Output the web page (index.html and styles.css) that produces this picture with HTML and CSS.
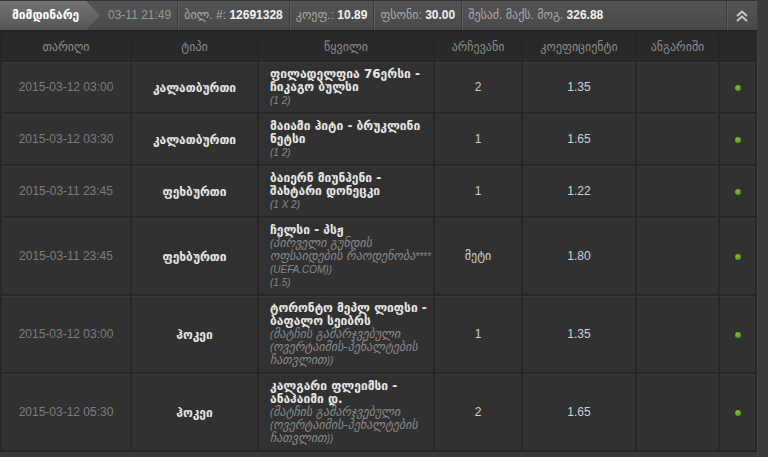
FILE: index.html
```html
<!DOCTYPE html>
<html>
  <head>
    <meta charset="utf-8">
    <title>Bet slip</title>
    <link rel="stylesheet" href="styles.css">
  </head>
  <body>
    <div class="screen">
      <div class="panel">
        <div class="bar">
          <div class="tab">მიმდინარე</div>
          <div class="cell muted first">03-11 21:49</div>
          <div class="cell">ბილ. #: <b>12691328</b></div>
          <div class="cell">კოეფ.: <b>10.89</b></div>
          <div class="cell">ფსონი: <b>30.00</b></div>
          <div class="cell grow">შესაძ. მაქს. მოგ. <b>326.88</b></div>
          <button class="toggle" type="button">
            <svg width="12" height="12" viewBox="0 0 12 12">
              <polyline points="1,6 6,1.5 11,6" fill="none" stroke="#c8c8c8" stroke-width="2"/>
              <polyline points="1,11 6,6.5 11,11" fill="none" stroke="#c8c8c8" stroke-width="2"/>
            </svg>
          </button>
        </div>

        <table class="bets">
          <colgroup>
            <col style="width:128px">
            <col style="width:125px">
            <col style="width:174px">
            <col style="width:86px">
            <col style="width:112px">
            <col style="width:81px">
            <col style="width:35px">
          </colgroup>
          <thead>
            <tr>
              <th>თარიღი</th>
              <th>ტიპი</th>
              <th>წყვილი</th>
              <th>არჩევანი</th>
              <th>კოეფიციენტი</th>
              <th>ანგარიში</th>
              <th></th>
            </tr>
          </thead>
          <tbody>
            <tr>
              <td class="date">2015-03-12 03:00</td>
              <td class="sport">კალათბურთი</td>
              <td class="match">
                <div class="name">ფილადელფია 76ერსი - ჩიკაგო ბულსი</div>
                <div class="sub">(1 2)</div>
              </td>
              <td class="val">2</td>
              <td class="val">1.35</td>
              <td></td>
              <td><span class="dot"></span></td>
            </tr>
            <tr>
              <td class="date">2015-03-12 03:30</td>
              <td class="sport">კალათბურთი</td>
              <td class="match">
                <div class="name">მაიამი ჰიტი - ბრუკლინი ნეტსი</div>
                <div class="sub">(1 2)</div>
              </td>
              <td class="val">1</td>
              <td class="val">1.65</td>
              <td></td>
              <td><span class="dot"></span></td>
            </tr>
            <tr>
              <td class="date">2015-03-11 23:45</td>
              <td class="sport">ფეხბურთი</td>
              <td class="match">
                <div class="name">ბაიერნ მიუნჰენი - შახტარი დონეცკი</div>
                <div class="sub">(1 X 2)</div>
              </td>
              <td class="val">1</td>
              <td class="val">1.22</td>
              <td></td>
              <td><span class="dot"></span></td>
            </tr>
            <tr>
              <td class="date">2015-03-11 23:45</td>
              <td class="sport">ფეხბურთი</td>
              <td class="match">
                <div class="name">ჩელსი - პსჟ</div>
                <div class="sub">(<span class="ka">პირველი გუნდის ოფსაიდების რაოდენობა</span>**** (UEFA.COM))</div>
                <div class="sub">(1.5)</div>
              </td>
              <td class="val ka-val">მეტი</td>
              <td class="val">1.80</td>
              <td></td>
              <td><span class="dot"></span></td>
            </tr>
            <tr>
              <td class="date">2015-03-12 03:00</td>
              <td class="sport">ჰოკეი</td>
              <td class="match">
                <div class="name">ტორონტო მეპლ ლიფსი - ბაფალო სეიბრს</div>
                <div class="sub">(<span class="ka">მატჩის გამარჯვებული</span> (<span class="ka">ოვერტაიმის-პენალტების ჩათვლით</span>))</div>
              </td>
              <td class="val">1</td>
              <td class="val">1.35</td>
              <td></td>
              <td><span class="dot"></span></td>
            </tr>
            <tr>
              <td class="date">2015-03-12 05:30</td>
              <td class="sport">ჰოკეი</td>
              <td class="match">
                <div class="name">კალგარი ფლეიმსი - ანაჰაიმი დ.</div>
                <div class="sub">(<span class="ka">მატჩის გამარჯვებული</span> (<span class="ka">ოვერტაიმის-პენალტების ჩათვლით</span>))</div>
              </td>
              <td class="val">2</td>
              <td class="val">1.65</td>
              <td></td>
              <td><span class="dot"></span></td>
            </tr>
          </tbody>
        </table>
      </div>
      <div class="rail"></div>
    </div>
  </body>
</html>
```

FILE: styles.css
```css
body {
    margin: 0;
    background: #393939;
    color: #ddd;
    font: 12px "Liberation Sans", "DejaVu Sans", sans-serif;
}

.screen {
    display: flex;
    height: 457px;
    overflow: hidden;
}

.panel {
    width: 757px;
    flex-shrink: 0;
    background: #262626;
    align-self: flex-start;
}

.rail {
    flex: 1;
    background: #3a3a3a;
    border-left: 1px solid #424242;
}

/* top bar */

.bar {
    display: flex;
    height: 29px;
    border-top: 1px solid #353535;
    border-bottom: 1px solid #222;
    background: linear-gradient(#545454, #494949);
    line-height: 29px;
}

.tab {
    width: 88px;
    padding-left: 12px;
    flex-shrink: 0;
    clip-path: polygon(0 0, 86px 0, 100px 50%, 86px 100%, 0 100%);
    background: linear-gradient(#747474, #555);
    color: #fff;
    font: bold 12px "DejaVu Sans", sans-serif;
    line-height: 29px;
}

.cell {
    padding: 0 6px;
    color: #a9a9a9;
    white-space: nowrap;
    border-right: 1px solid #3b3b3b;
    box-shadow: 1px 0 0 #5d5d5d;
}

.cell.first {
    padding-left: 8px;
}

.cell.grow {
    flex: 1;
}

.cell b {
    color: #f2f2f2;
}

.muted {
    color: #9a9a9a;
}

.toggle {
    width: 30px;
    flex-shrink: 0;
    border: none;
    background: transparent;
    padding: 0;
    display: flex;
    align-items: center;
    justify-content: center;
}

/* table */

.bets {
    width: 757px;
    table-layout: fixed;
    border-spacing: 2px;
}

.bets th {
    height: 27px;
    padding: 0;
    background: #292929;
    color: #8c8c8c;
    font: 12px "DejaVu Sans", sans-serif;
}

.bets td {
    padding: 5px 8px;
    background: #313131;
    border-top: 1px solid #3a3a3a;
    line-height: 13px;
    text-align: center;
    vertical-align: middle;
}

.bets td.date {
    color: #7e7e7e;
}

.bets td.sport {
    color: #e6e6e6;
    font: bold 12px "DejaVu Sans", sans-serif;
}

.bets td.match {
    text-align: left;
    padding-left: 11px;
    padding-right: 0;
}

.name {
    color: #e8e8e8;
    font: bold 12px "DejaVu Sans", sans-serif;
    line-height: 13px;
}

.sub {
    color: #8a8a8a;
    font-style: italic;
    font-size: 10px;
    line-height: 13px;
}

.sub .ka {
    font: italic 12px/13px "DejaVu Sans", sans-serif;
}

.bets td.val {
    color: #ccd1d5;
}

.bets td.ka-val {
    font-family: "DejaVu Sans", sans-serif;
}

.dot {
    display: inline-block;
    width: 6px;
    height: 6px;
    margin-top: 3px;
    border-radius: 50%;
    background: radial-gradient(circle at 40% 35%, #7fbf2a, #4f8c12);
}
```
